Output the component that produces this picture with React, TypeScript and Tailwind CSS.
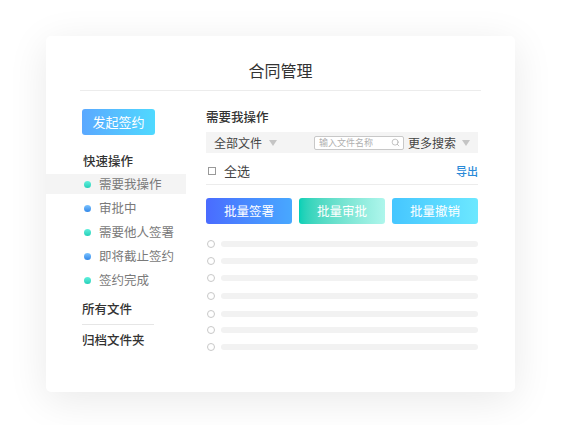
import { Search } from "lucide-react";

const quick = [
  { label: "需要我操作", dot: "bg-gradient-to-b from-[#5ff0dd] to-[#1fcfb8]", active: true },
  { label: "审批中", dot: "bg-gradient-to-b from-[#7cc4ff] to-[#2f86e8]" },
  { label: "需要他人签署", dot: "bg-gradient-to-b from-[#5ff0dd] to-[#1fcfb8]" },
  { label: "即将截止签约", dot: "bg-gradient-to-b from-[#7cc4ff] to-[#2f86e8]" },
  { label: "签约完成", dot: "bg-gradient-to-b from-[#5ff0dd] to-[#1fcfb8]" },
];

const rows = [244, 261, 278, 296, 314, 330, 347];

function Caret() {
  return (
    <span className="inline-block w-0 h-0 border-l-[4px] border-r-[4px] border-t-[6px] border-l-transparent border-r-transparent border-t-[#c4c4c4]" />
  );
}

export default function App() {
  return (
    <div
      className="w-[567px] h-[425px] bg-white overflow-hidden pt-[36px] pl-[46px]"
      style={{ fontFamily: '"Noto Sans CJK SC", "Noto Sans", sans-serif' }}
    >
      <div className="w-[469px] h-[356px] bg-white rounded-[5px] shadow-[0_8px_40px_rgba(0,0,0,0.09)] flex flex-col">
        {/* Header */}
        <div className="mx-[34px] h-[55px] pt-[22px] border-b border-[#ececec] text-center text-[16px] leading-[24px] text-[#333]">
          合同管理
        </div>

        <div className="flex flex-1">
          {/* Sidebar */}
          <div className="w-[140px] shrink-0 pt-[18px]">
            <div className="ml-[36px] w-[73px] h-[26px] rounded-[3px] bg-gradient-to-r from-[#5aa8ff] to-[#4fd9ff] text-white text-[13px] leading-[26px] text-center">
              发起签约
            </div>
            <div className="ml-[37px] mt-[17px] text-[12.5px] leading-[18px] font-medium text-[#333]">快速操作</div>
            <div className="mt-[4px]">
              {quick.map((q) => (
                <div
                  key={q.label}
                  className={`flex items-center h-[20px] mb-[4px] pl-[38px] ${q.active ? "bg-[#f4f4f4]" : ""}`}
                >
                  <span className={`w-[7px] h-[7px] rounded-full ${q.dot}`} />
                  <span className="ml-[8px] text-[12.5px] text-[#7a7a7a]">{q.label}</span>
                </div>
              ))}
            </div>
            <div className="ml-[36px] mt-[10px] w-[72px] pb-[6px] border-b border-[#e6e6e6] text-[12.5px] leading-[18px] font-medium text-[#333]">
              所有文件
            </div>
            <div className="ml-[36px] mt-[6px] text-[12.5px] leading-[18px] font-medium text-[#333]">归档文件夹</div>
          </div>

          {/* Main */}
          <div className="ml-[20px] w-[272px] pt-[17px]">
            <div className="text-[12.5px] leading-[18px] font-medium text-[#333]">需要我操作</div>
            <div className="mt-[6px] h-[21px] bg-[#f4f4f4] flex items-center pl-[8px] pr-[8px] whitespace-nowrap">
              <span className="text-[12px] text-[#444]">全部文件</span>
              <span className="ml-[7px] flex"><Caret /></span>
              <div className="ml-[37px] w-[90px] shrink-0 h-[14px] border border-[#c8c8c8] bg-white rounded-[2px] flex items-center pl-[4px] pr-[3px]">
                <span className="text-[9px] leading-[10px] text-[#b0b0b0] flex-1">输入文件名称</span>
                <Search size={9} strokeWidth={1.5} color="#9a9a9a" />
              </div>
              <span className="ml-[4px] text-[12px] text-[#444]">更多搜索</span>
              <span className="ml-auto flex"><Caret /></span>
            </div>
            <div className="mt-[8px] h-[20px] flex items-center border-b border-[#ececec] pb-[3px] box-content">
              <span className="ml-[2px] w-[8px] h-[8px] border border-[#999]" />
              <span className="ml-[8px] text-[13px] text-[#444]">全选</span>
              <span className="ml-auto text-[11px] font-medium text-[#2a8ad8]">导出</span>
            </div>
            <div className="mt-[13px] flex gap-[7px] h-[26px]">
              <div className="flex-1 rounded-[3px] bg-gradient-to-r from-[#4a6bff] to-[#48a8ff] text-white text-[12.5px] leading-[26px] text-center">
                批量签署
              </div>
              <div className="flex-1 rounded-[3px] bg-gradient-to-r from-[#00d0b6] to-[#aef6ec] text-white text-[12.5px] leading-[26px] text-center">
                批量审批
              </div>
              <div className="flex-1 rounded-[3px] bg-gradient-to-r from-[#45c6ff] to-[#6ce8ff] text-white text-[12.5px] leading-[26px] text-center">
                批量撤销
              </div>
            </div>
            <div className="mt-[15px]">
              {rows.map((y, i) => (
                <div
                  key={y}
                  className={`flex items-center h-[10px] ${i === 0 ? "" : i === 3 || i === 4 ? "mt-[8px]" : i === 5 ? "mt-[6px]" : "mt-[7px]"}`}
                >
                  <span className="ml-[1px] w-[8px] h-[8px] rounded-full border border-[#c8c8c8]" />
                  <span className="ml-[6px] flex-1 h-[6px] rounded-full bg-[#f2f2f2]" />
                </div>
              ))}
            </div>
          </div>
        </div>
      </div>
    </div>
  );
}
